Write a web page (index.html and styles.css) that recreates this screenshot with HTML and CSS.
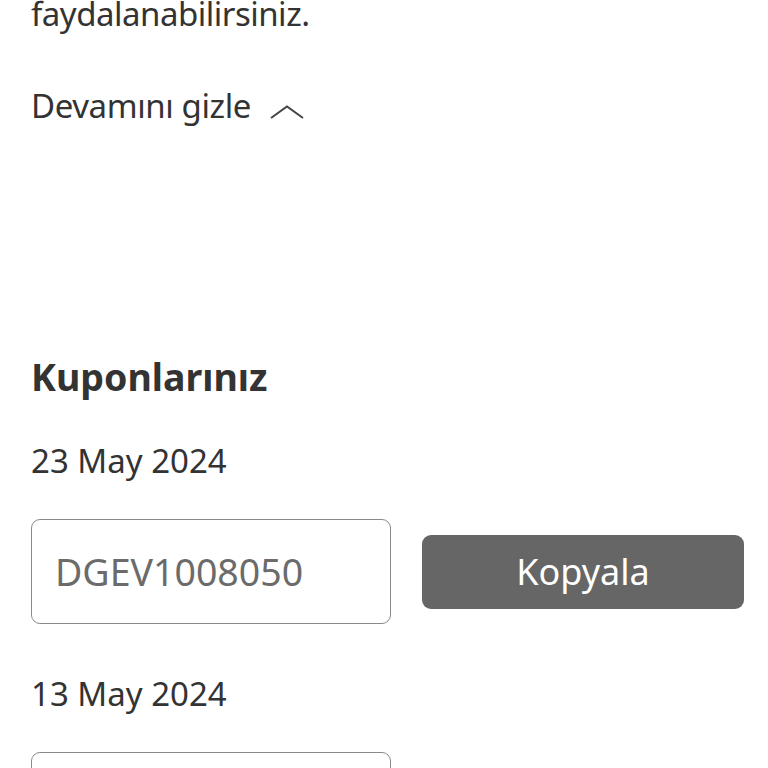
FILE: index.html
```html
<!DOCTYPE html>
<html lang="tr">
<head>
    <meta charset="UTF-8">
    <meta name="viewport" content="width=device-width, initial-scale=1.0">
    <title>Kuponlarınız</title>
    <link rel="stylesheet" href="styles.css">
</head>
<body>
    <div class="container">
        <div class="description">
            <p class="desc_text">faydalanabilirsiniz.</p>
            <button class="toggle_button">
                <span>Devamını gizle</span>
                <svg class="caret" width="34" height="14" viewBox="0 0 34 14">
                    <polyline points="1,13 17,1.5 33,13" fill="none" stroke="#444" stroke-width="2"/>
                </svg>
            </button>
        </div>

        <div class="coupon_section">
            <h2>Kuponlarınız</h2>

            <div class="coupon">
                <div class="coupon_date">23 May 2024</div>
                <div class="coupon_row">
                    <input type="text" class="coupon_code" value="DGEV1008050" readonly>
                    <button class="copy_button">Kopyala</button>
                </div>
            </div>

            <div class="coupon">
                <div class="coupon_date">13 May 2024</div>
                <div class="coupon_row">
                    <input type="text" class="coupon_code" value="" readonly>
                    <button class="copy_button">Kopyala</button>
                </div>
            </div>
        </div>
    </div>
</body>
</html>
```

FILE: styles.css
```css
body {
    font-family: "Noto Sans", "Open Sans", sans-serif;
    margin: 0;
    padding: 0;
    background-color: #ffffff;
    color: #333;
    overflow: hidden;
}

.container {
    padding: 0 24px 0 31px;
}

.desc_text {
    margin: -6px 0 0 0;
    font-size: 33px;
    line-height: 40px;
    letter-spacing: -0.5px;
}

.toggle_button {
    display: flex;
    align-items: center;
    gap: 19px;
    margin-top: 52px;
    padding: 0;
    border: none;
    background: none;
    font-family: inherit;
    font-size: 33px;
    line-height: 40px;
    letter-spacing: -0.4px;
    color: #333;
    cursor: pointer;
}

.caret {
    margin-top: 11px;
}

.coupon_section {
    margin-top: 229px;
}

.coupon_section h2 {
    margin: 0;
    font-size: 37.5px;
    font-weight: 700;
    line-height: 44px;
    color: #333;
}

.coupon {
    margin-top: 42px;
}

.coupon + .coupon {
    margin-top: 50px;
}

.coupon_date {
    font-size: 33px;
    line-height: 40px;
}

.coupon_row {
    display: flex;
    align-items: center;
    gap: 31px;
    margin-top: 38px;
}

.coupon_code {
    box-sizing: border-box;
    width: 360px;
    height: 105px;
    padding: 0 23px;
    border: 1.5px solid #8a8a8a;
    border-radius: 9px;
    font-family: inherit;
    font-size: 37.5px;
    color: #6b6b6b;
    background: #fff;
    outline: none;
}

.copy_button {
    width: 323px;
    height: 74px;
    border: none;
    border-radius: 9px;
    background-color: #666;
    color: #fff;
    font-family: inherit;
    font-size: 36px;
    cursor: pointer;
}
```
